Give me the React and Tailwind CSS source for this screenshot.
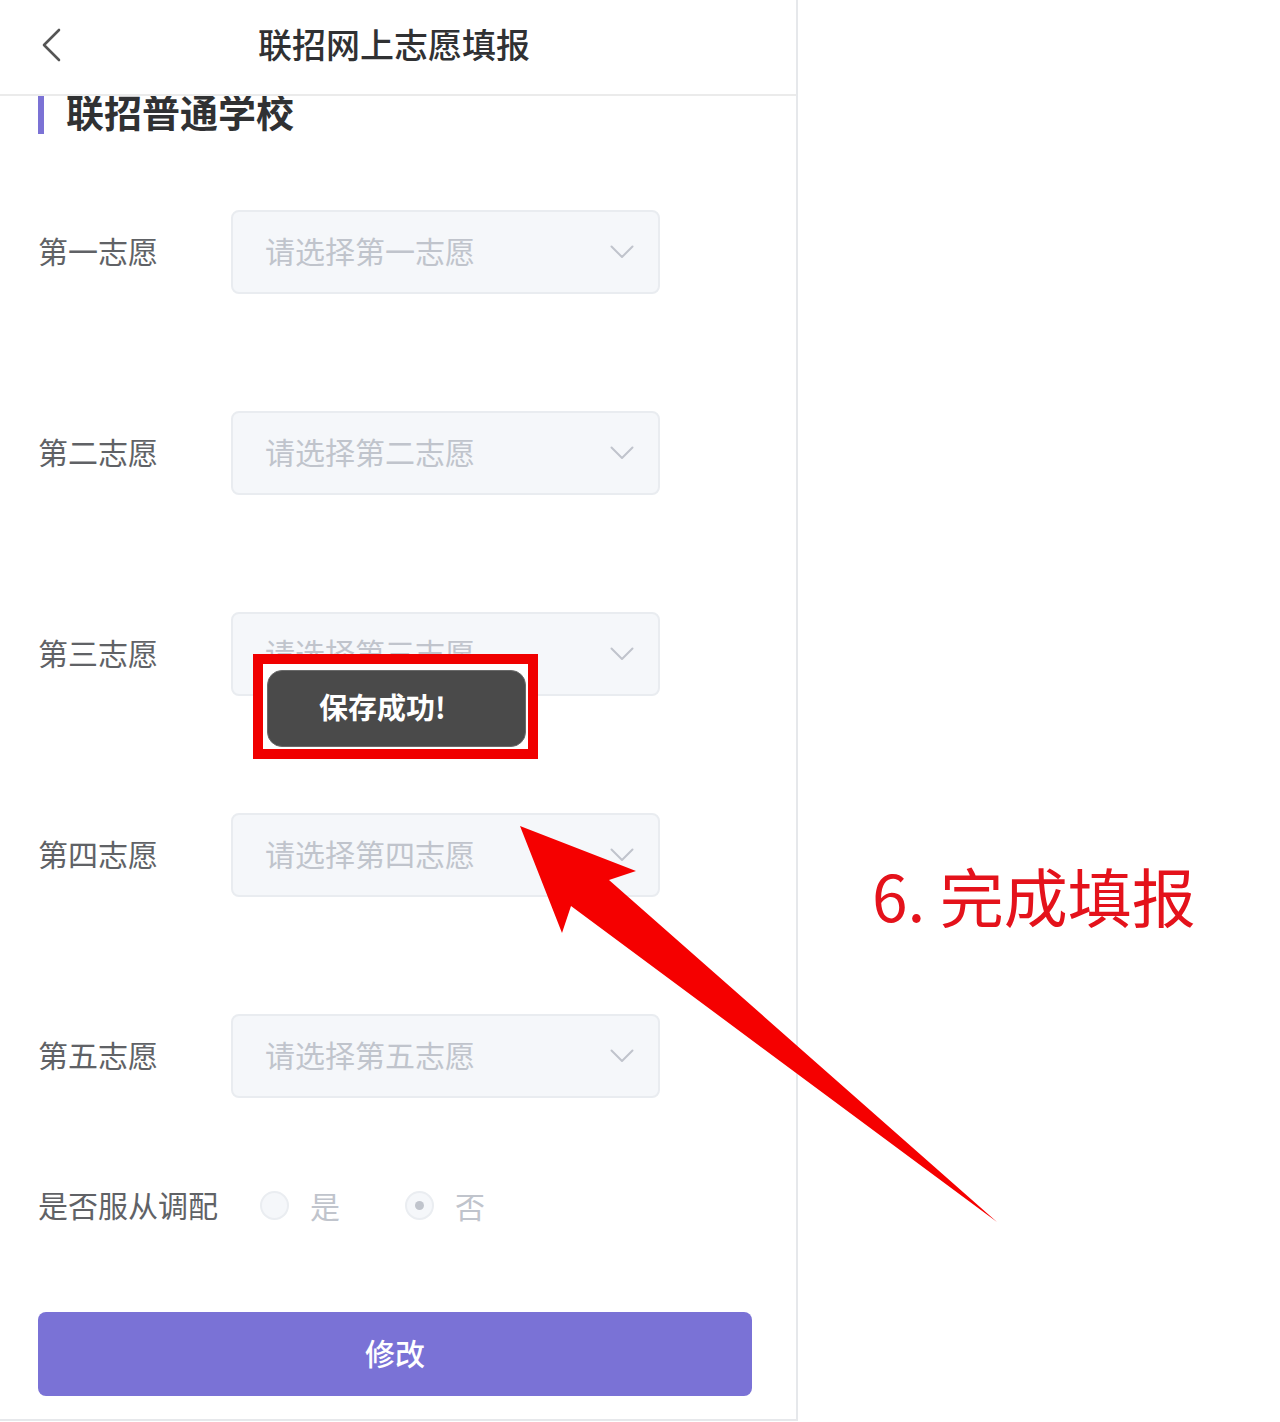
const font = { fontFamily: '"Noto Sans CJK SC", "Noto Sans", sans-serif' };

const choices = ['第一志愿', '第二志愿', '第三志愿', '第四志愿', '第五志愿'];

function ChevronDown() {
  return (
    <svg width="24" height="14" viewBox="0 0 24 14" fill="none">
      <path d="M1.5 1.5 L12 12 L22.5 1.5" stroke="#c0c4cc" strokeWidth="2" strokeLinecap="round" strokeLinejoin="round" />
    </svg>
  );
}

function ChoiceRow({ name }) {
  return (
    <div className="flex items-center h-[84px]">
      <div className="w-[193px] text-[30px] text-[#606266] leading-none -mt-[4px]">{name}</div>
      <div className="w-[429px] h-[84px] rounded-[8px] border-2 border-[#e9ecf0] bg-[#f5f7fa] flex items-center justify-between pl-[32px] pr-[24px]">
        <span className="text-[30px] text-[#c0c4cc] leading-none -mt-[4px]">请选择{name}</span>
        <ChevronDown />
      </div>
    </div>
  );
}

function Radio({ label, checked }) {
  return (
    <div className="flex items-center">
      <div className="w-[29px] h-[29px] rounded-full border-2 border-[#eaedf1] bg-[#f5f7fa] flex items-center justify-center">
        {checked && <div className="w-[9px] h-[9px] rounded-full bg-[#c0c4cc]"></div>}
      </div>
      <span className="ml-[21px] text-[30px] text-[#c0c4cc] leading-none">{label}</span>
    </div>
  );
}

export default function App() {
  return (
    <div className="relative w-[1280px] h-[1422px] bg-white overflow-hidden" style={font}>
      <div className="flex h-full">
        {/* phone panel */}
        <div className="w-[798px] h-[1421px] border-r-2 border-b-2 border-[#e6e8eb] flex flex-col">
          {/* header */}
          <div className="relative h-[96px] shrink-0 border-b-2 border-[#ebebeb] flex items-center justify-center">
            <svg className="absolute left-[40px] top-[28px]" width="22" height="34" viewBox="0 0 22 34" fill="none">
              <path d="M19 2 L4 17 L19 32" stroke="#555" strokeWidth="2.6" strokeLinecap="round" strokeLinejoin="round" />
            </svg>
            <span className="text-[34px] font-medium text-[#303133] leading-none -mt-[6px] ml-[-8px]">联招网上志愿填报</span>
          </div>

          {/* content */}
          <div className="px-[38px] flex flex-col">
            <div className="flex items-center h-[40px] -mt-[1px]">
              <div className="w-[6px] h-[38px] bg-[#7b72d5]"></div>
              <span className="ml-[22px] text-[38px] font-bold text-[#303133] leading-none -mt-[8px]">联招普通学校</span>
            </div>

            <div className="mt-[75px] flex flex-col gap-[117px]">
              {choices.map((c) => (
                <ChoiceRow key={c} name={c} />
              ))}
            </div>

            <div className="mt-[87px] h-[40px] flex items-center">
              <span className="w-[222px] text-[30px] text-[#606266] leading-none -mt-[2px]">是否服从调配</span>
              <div className="flex items-center gap-[65px]">
                <Radio label="是" />
                <Radio label="否" checked />
              </div>
            </div>

            <button className="mt-[87px] w-[714px] h-[84px] rounded-[8px] bg-[#7a72d6] text-white text-[30px] font-medium leading-none flex items-center justify-center">
              <span className="-mt-[4px]">修改</span>
            </button>
          </div>
        </div>
        <div className="flex-1"></div>
      </div>

      {/* toast with annotation frame */}
      <div className="absolute left-[253px] top-[654px] w-[285px] h-[105px] border-[10px] border-[#f00000] bg-white pl-[4px] pt-[6px] pr-[2px] pb-[2px]">
        <div className="w-full h-full rounded-[15px] bg-[#4a4a4a] border border-[#6a6a6a] flex items-center pl-[51px]">
          <span className="text-[29px] font-bold text-white leading-none -mt-[4px]">保存成功!</span>
        </div>
      </div>

      {/* arrow annotation */}
      <svg className="absolute left-0 top-0 pointer-events-none" width="1280" height="1422" viewBox="0 0 1280 1422">
        <polygon points="520,826 636,871 609,880 997,1222 571,906 562,933" fill="#f50000" />
      </svg>

      <div className="absolute left-[872px] top-[862px] text-[64px] text-[#e4121b] leading-none whitespace-nowrap">
        6. 完成填报
      </div>
    </div>
  );
}
